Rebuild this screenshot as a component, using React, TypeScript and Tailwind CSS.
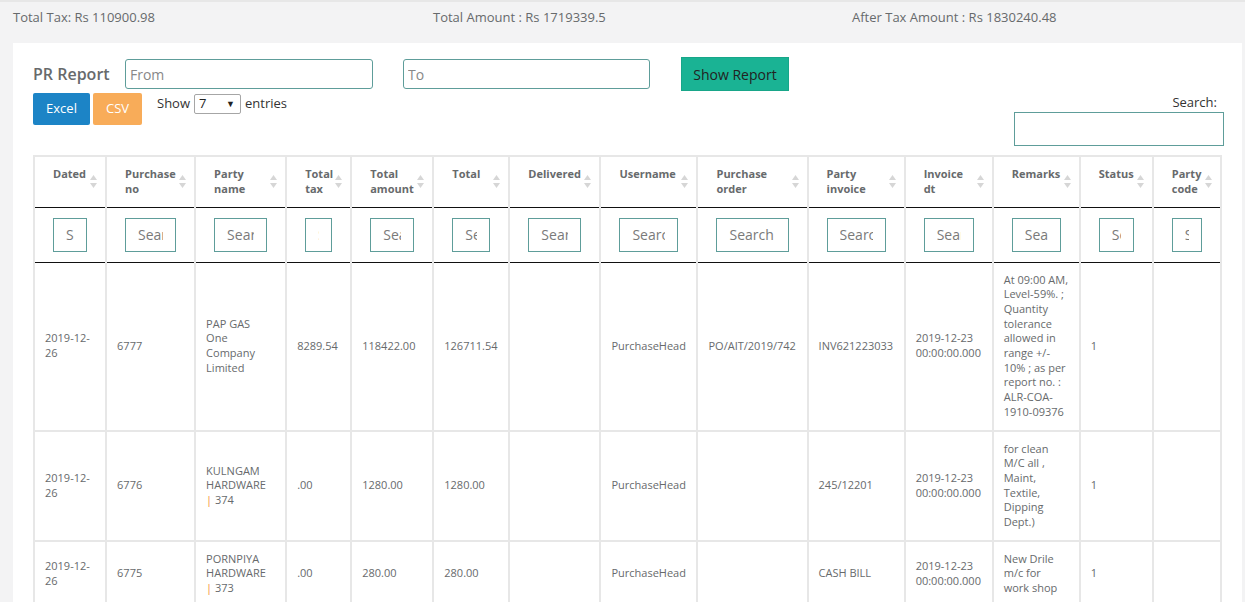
import React from "react";

const cols: { w: number; label: string[] }[] = [
  { w: 72, label: ["Dated"] },
  { w: 89, label: ["Purchase", "no"] },
  { w: 91, label: ["Party", "name"] },
  { w: 65, label: ["Total", "tax"] },
  { w: 82, label: ["Total", "amount"] },
  { w: 76, label: ["Total"] },
  { w: 91, label: ["Delivered"] },
  { w: 97, label: ["Username"] },
  { w: 110, label: ["Purchase", "order"] },
  { w: 97, label: ["Party", "invoice"] },
  { w: 88, label: ["Invoice", "dt"] },
  { w: 87, label: ["Remarks"] },
  { w: 73, label: ["Status"] },
  { w: 68, label: ["Party", "code"] },
];

type Cell = (string | React.ReactNode)[];

const pipe = (n: string) => (
  <>
    <span className="font-semibold text-[#f8ac59]">|</span> {n}
  </>
);

const rows: Cell[][] = [
  [
    ["2019-12-", "26"],
    ["6777"],
    ["PAP GAS", "One", "Company", "Limited"],
    ["8289.54"],
    ["118422.00"],
    ["126711.54"],
    [],
    ["PurchaseHead"],
    ["PO/AIT/2019/742"],
    ["INV621223033"],
    ["2019-12-23", "00:00:00.000"],
    [
      "At 09:00 AM,",
      "Level-59%. ;",
      "Quantity",
      "tolerance",
      "allowed in",
      "range +/-",
      "10% ; as per",
      "report no. :",
      "ALR-COA-",
      "1910-09376",
    ],
    ["1"],
    [],
  ],
  [
    ["2019-12-", "26"],
    ["6776"],
    ["KULNGAM", "HARDWARE", pipe("374")],
    [".00"],
    ["1280.00"],
    ["1280.00"],
    [],
    ["PurchaseHead"],
    [],
    ["245/12201"],
    ["2019-12-23", "00:00:00.000"],
    ["for clean", "M/C all ,", "Maint,", "Textile,", "Dipping", "Dept.)"],
    ["1"],
    [],
  ],
  [
    ["2019-12-", "26"],
    ["6775"],
    ["PORNPIYA", "HARDWARE", pipe("373")],
    [".00"],
    ["280.00"],
    ["280.00"],
    [],
    ["PurchaseHead"],
    [],
    ["CASH BILL"],
    ["2019-12-23", "00:00:00.000"],
    ["New Drile", "m/c for", "work shop"],
    ["1"],
    [],
  ],
];

function SortIcon() {
  return (
    <svg width="7" height="13" viewBox="0 0 7 13" className="absolute right-[8px] top-[18px]">
      <path d="M3.5 0 L7 5 L0 5 Z" fill="#d6d6d6" />
      <path d="M3.5 13 L7 8 L0 8 Z" fill="#d6d6d6" />
    </svg>
  );
}

export default function App() {
  return (
    <div
      className="h-[602px] w-[1245px] overflow-hidden bg-[#f3f3f4] text-[#676a6c]"
      style={{ fontFamily: "'Open Sans', 'Noto Sans', sans-serif" }}
    >
      <div className="grid h-[43px] grid-cols-[420px_419px_1fr] border-t-2 border-[#e7e7e7] pl-[13px] pt-[6px] text-[13px]">
        <div>Total Tax: Rs 110900.98</div>
        <div>Total Amount : Rs 1719339.5</div>
        <div>After Tax Amount : Rs 1830240.48</div>
      </div>

      <div className="ml-[13px] w-[1229px] bg-white pb-10 pl-[20px] pt-[14px]">
        <div className="flex h-[34px] items-center">
          <div className="w-[92px] text-[16px] font-semibold text-[#676a6c]">PR Report</div>
          <input
            placeholder="From"
            className="h-[30px] w-[248px] rounded-[3px] border border-[#5e9d9a] px-[4px] text-[14px] text-[#555] placeholder:text-[#888] outline-none"
          />
          <input
            placeholder="To"
            className="ml-[30px] h-[30px] w-[247px] rounded-[3px] border border-[#5e9d9a] px-[4px] text-[14px] text-[#555] placeholder:text-[#888] outline-none"
          />
          <button className="ml-[31px] h-[34px] w-[108px] border border-[#18a689] bg-[#1ab394] text-[14px] text-[#222]">
            Show Report
          </button>
        </div>

        <div className="mt-[2px] flex justify-between pr-[18px]">
          <div className="flex items-start">
            <button className="h-[32px] w-[57px] rounded-[2px] bg-[#1c84c6] text-[13px] text-white">Excel</button>
            <button className="ml-[3px] h-[32px] w-[49px] rounded-[2px] bg-[#f8ac59] text-[13px] text-white">CSV</button>
            <div className="ml-[15px] mt-[1px] flex items-center text-[13px] text-[#333]">
              <span>Show</span>
              <div className="mx-[4px] flex h-[20px] w-[47px] items-center justify-between rounded-[2px] border border-[#a6a6a6] pl-[4px] pr-[5px] text-[13px] text-[#222]">
                <span>7</span>
                <span className="text-[9px]">▼</span>
              </div>
              <span>entries</span>
            </div>
          </div>
          <div className="flex flex-col items-end">
            <div className="mr-[7px] text-[13px] leading-[18px] text-[#333]">Search:</div>
            <input className="mt-[1px] h-[34px] w-[210px] border border-[#5e9d9a] outline-none" />
          </div>
        </div>

        <table className="mt-[9px] table-fixed border-collapse" style={{ width: 1189 }}>
          <colgroup>
            {cols.map((c, i) => (
              <col key={i} style={{ width: c.w }} />
            ))}
          </colgroup>
          <thead>
            <tr className="border-b border-b-[#111]">
              {cols.map((c, i) => (
                <th
                  key={i}
                  className="relative h-[51px] border-2 border-b-0 border-[#e7e7e7] pl-[18px] pr-[4px] pt-[9px] text-left align-top text-[11px] font-bold leading-[15px] text-[#676a6c]"
                >
                  {c.label.map((l, j) => (
                    <div key={j} className="whitespace-nowrap">
                      {l}
                    </div>
                  ))}
                  <SortIcon />
                </th>
              ))}
            </tr>
            <tr className="border-b border-b-[#111]">
              {cols.map((c, i) => (
                <th key={i} className="h-[55px] border-x-2 border-[#e7e7e7] pl-[18px] pr-[18px] py-[10px] font-normal">
                  <input
                    placeholder="Search"
                    className="block h-[34px] w-full min-w-0 border border-[#5e9d9a] px-[12px] text-[14px] text-[#555] placeholder:text-[#7a7a7a] outline-none"
                  />
                </th>
              ))}
            </tr>
          </thead>
          <tbody>
            {rows.map((r, ri) => (
              <tr key={ri}>
                {r.map((cell, ci) => (
                  <td
                    key={ci}
                    className="border-2 border-t-0 border-[#e7e7e7] px-[10px] py-[10px] align-middle text-[11px] leading-[14.7px] text-[#676a6c]"
                  >
                    {cell.map((l, j) => (
                      <div key={j} className="whitespace-nowrap">
                        {l}
                      </div>
                    ))}
                  </td>
                ))}
              </tr>
            ))}
          </tbody>
        </table>
      </div>
    </div>
  );
}
